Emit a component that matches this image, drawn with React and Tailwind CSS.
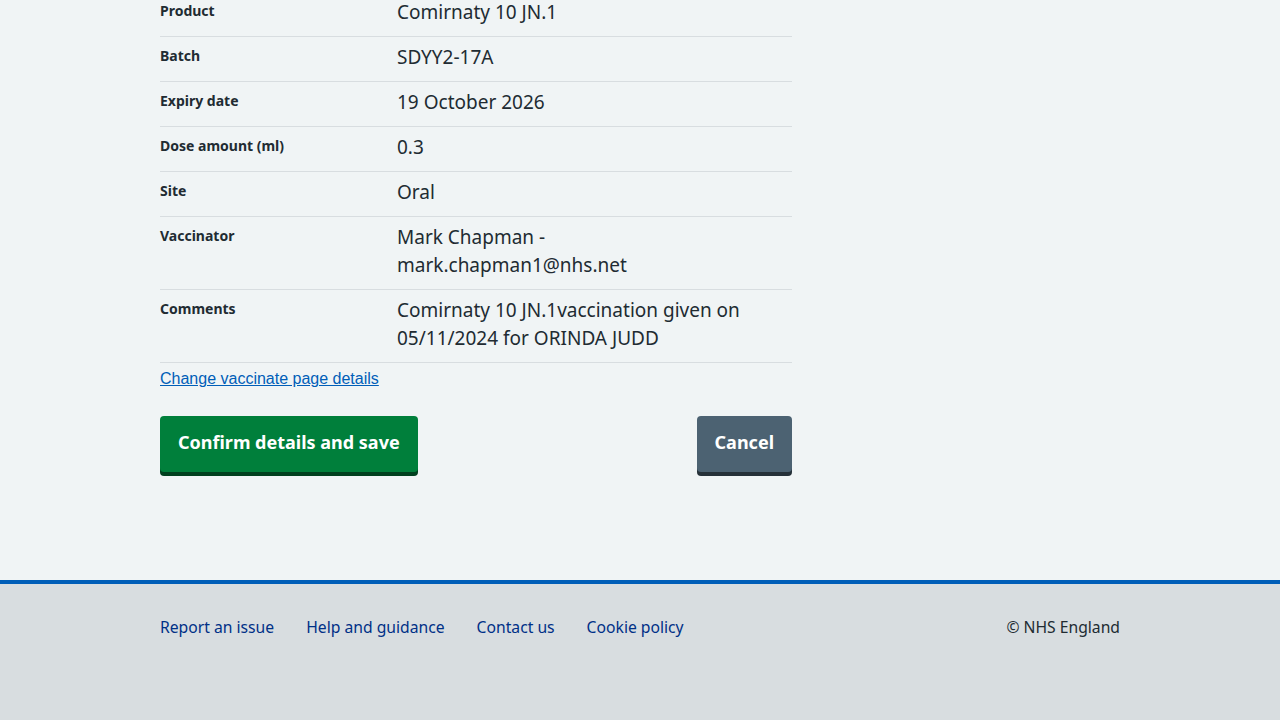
import React from 'react';

const rows = [
  { label: 'Product', value: ['Comirnaty 10 JN.1'] },
  { label: 'Batch', value: ['SDYY2-17A'] },
  { label: 'Expiry date', value: ['19 October 2026'] },
  { label: 'Dose amount (ml)', value: ['0.3'] },
  { label: 'Site', value: ['Oral'] },
  { label: 'Vaccinator', value: ['Mark Chapman -', 'mark.chapman1@nhs.net'] },
  { label: 'Comments', value: ['Comirnaty 10 JN.1vaccination given on', '05/11/2024 for ORINDA JUDD'] },
];

const footerLinks = ['Report an issue', 'Help and guidance', 'Contact us', 'Cookie policy'];

export default function App() {
  return (
    <div className="min-h-[720px] flex flex-col bg-[#f0f4f5] text-[#212b32] font-['Noto_Sans',sans-serif]">
      <main className="w-[960px] mx-auto pb-[108px]">
        <div className="w-[632px]">
          <dl>
            {rows.map((r, i) => (
              <div key={r.label} className={`flex border-b border-[#d8dde0] pb-2 ${i === 0 ? 'pt-0' : 'pt-2'}`}>
                <dt className="w-[237px] shrink-0 text-[14px] leading-[20px] font-bold pt-[1px]">{r.label}</dt>
                <dd className="flex-1 text-[19px] leading-[28px] -mt-[2px] pb-[2px]">
                  {r.value.map(v => <div key={v}>{v}</div>)}
                </dd>
              </div>
            ))}
          </dl>
          <a href="#" className="block mt-[6px] text-[16px] leading-[20px] text-[#005eb8] underline font-['Liberation_Sans',Arial,sans-serif]">
            Change vaccinate page details
          </a>
          <div className="flex justify-between mt-[27px]">
            <button className="bg-[#007f3b] text-white font-bold text-[18px] leading-[32px] px-[18px] pt-[10px] pb-[14px] rounded-[4px] shadow-[0_4px_0_#00401e]">
              Confirm details and save
            </button>
            <button className="bg-[#4c6272] text-white font-bold text-[18px] leading-[32px] px-[18px] pt-[10px] pb-[14px] rounded-[4px] shadow-[0_4px_0_#263139]">
              Cancel
            </button>
          </div>
        </div>
      </main>
      <footer className="flex-1 bg-[#d8dde0] border-t-4 border-[#005eb8]">
        <div className="w-[960px] mx-auto flex justify-between pt-[31px] pb-[81px] text-[15.7px] leading-[24px]">
          <ul className="flex gap-8">
            {footerLinks.map(l => (
              <li key={l}><a href="#" className="text-[#003087]">{l}</a></li>
            ))}
          </ul>
          <p className="text-[#212b32]">© NHS England</p>
        </div>
      </footer>
    </div>
  );
}
